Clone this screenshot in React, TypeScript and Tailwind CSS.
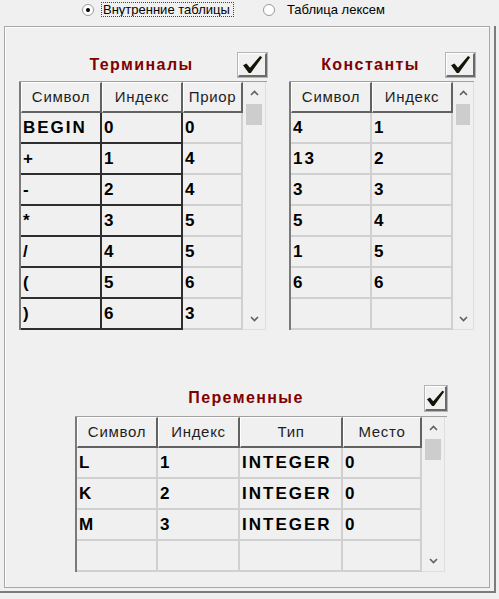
import React from "react";

type Col = { w: string; title: string; fixed?: boolean };

function Chevron({ up }: { up?: boolean }) {
  return (
    <svg width="9" height="6" viewBox="0 0 9 6">
      <path
        d={up ? "M1 5 L4.5 1.5 L8 5" : "M1 1 L4.5 4.5 L8 1"}
        fill="none"
        stroke="#606060"
        strokeWidth="1.6"
      />
    </svg>
  );
}

function CheckButton({ size }: { size: string }) {
  return (
    <div
      className={`${size} flex items-center justify-center bg-[#f0f0f0] border-t border-l border-t-white border-l-white border-r-2 border-b-2 border-r-[#6a6a6a] border-b-[#6a6a6a] shadow-[0_0_0_1px_#b4b4b4]`}
    >
      <svg width="21" height="19" viewBox="0 0 20 18">
        <polygon
          points="1,9.8 4.2,8 7.6,12 17.2,0.8 19.2,2 8.4,17 6.4,17"
          fill="#141408"
        />
      </svg>
    </div>
  );
}

function ScrollBar({ w }: { w: string }) {
  return (
    <div
      className={`${w} flex flex-col bg-[#f0f0f0] border-r border-b border-[#dedede]`}
    >
      <div className="h-[21px] flex items-center justify-center">
        <Chevron up />
      </div>
      <div className="mt-[1px] mx-[3px] h-[21px] bg-[#cdcdcd]" />
      <div className="flex-1" />
      <div className="h-[21px] flex items-center justify-center">
        <Chevron />
      </div>
    </div>
  );
}

function Grid({
  cols,
  rows,
  sb,
}: {
  cols: Col[];
  rows: string[][];
  sb: string;
}) {
  return (
    <div className="flex border-t border-t-[#a0a0a0]">
      <div className="flex flex-col border-l-2 border-l-[#7a7a7a]">
        <div className="flex">
          {cols.map((c, i) => (
            <div
              key={i}
              className={`${c.w} h-[31px] flex items-center justify-center overflow-hidden whitespace-nowrap text-[15px] tracking-[0.7px] text-[#1e1e1e] border-t border-l border-t-white border-l-white border-r-2 border-b-2 border-r-[#626262] border-b-[#626262]`}
            >
              {c.title}
            </div>
          ))}
        </div>
        {rows.map((r, ri) => (
          <div key={ri} className="flex">
            {cols.map((c, ci) => (
              <div
                key={ci}
                className={`${c.w} h-[31px] flex items-center pl-[2px] overflow-hidden whitespace-nowrap text-[17px] font-bold tracking-[2px] text-black border-r-2 border-b-2 ${
                  c.fixed ? "border-[#2e2e2e]" : "border-[#d0d0d0]"
                }`}
              >
                {r[ci]}
              </div>
            ))}
          </div>
        ))}
      </div>
      <ScrollBar w={sb} />
    </div>
  );
}

function Radio({ checked }: { checked?: boolean }) {
  return (
    <div className="w-[12px] h-[12px] rounded-full border border-[#9a9a9a] bg-white flex items-center justify-center">
      {checked && <div className="w-[4px] h-[4px] rounded-full bg-black" />}
    </div>
  );
}

function Title({ text, cls }: { text: string; cls: string }) {
  return (
    <div
      className={`${cls} text-center whitespace-nowrap text-[16px] font-bold tracking-[1.4px] text-[#800000]`}
    >
      {text}
    </div>
  );
}

export default function App() {
  const term: Col[] = [
    { w: "w-[81px]", title: "Символ", fixed: true },
    { w: "w-[81px]", title: "Индекс", fixed: true },
    { w: "w-[60px]", title: "Приор" },
  ];
  const termRows = [
    ["BEGIN", "0", "0"],
    ["+", "1", "4"],
    ["-", "2", "4"],
    ["*", "3", "5"],
    ["/", "4", "5"],
    ["(", "5", "6"],
    [")", "6", "3"],
  ];
  const cons: Col[] = [
    { w: "w-[81px]", title: "Символ" },
    { w: "w-[81px]", title: "Индекс" },
  ];
  const consRows = [
    ["4", "1"],
    ["13", "2"],
    ["3", "3"],
    ["5", "4"],
    ["1", "5"],
    ["6", "6"],
    ["", ""],
  ];
  const vars: Col[] = [
    { w: "w-[81px]", title: "Символ" },
    { w: "w-[82px]", title: "Индекс" },
    { w: "w-[103px]", title: "Тип" },
    { w: "w-[79px]", title: "Место" },
  ];
  const varRows = [
    ["L", "1", "INTEGER", "0"],
    ["K", "2", "INTEGER", "0"],
    ["M", "3", "INTEGER", "0"],
    ["", "", "", ""],
  ];

  return (
    <div className="w-[499px] h-[599px] bg-[#f0f0f0] overflow-hidden font-['Liberation_Sans',Arial,sans-serif] text-black">
      {/* radio row */}
      <div className="h-[19px] flex items-center pl-[82px] text-[13px]">
        <Radio checked />
        <div className="ml-[7px] w-[133px] h-[15px] border border-dotted border-[#444] overflow-hidden whitespace-nowrap pl-[1px] leading-[13px]">
          Внутренние таблицы
        </div>
        <div className="ml-[29px]">
          <Radio />
        </div>
        <div className="ml-[12px] whitespace-nowrap leading-[13px]">
          Таблица лексем
        </div>
      </div>

      {/* panel */}
      <div className="mt-[7px] w-[496px] h-[567px] border-r-2 border-b-2 border-[#7c7c7c]">
        <div className="ml-[4px] w-[486px] h-[562px] border border-[#a8a8a8] shadow-[inset_1px_1px_0_#ffffff]">
          <div className="pt-[26px] pl-[14px] flex gap-[22px]">
            {/* Terminals */}
            <div className="w-[248px] flex flex-col">
              <div className="h-[24px] flex items-center">
                <Title text="Терминалы" cls="ml-[61px] w-[123px]" />
                <div className="ml-auto">
                  <CheckButton size="w-[29px] h-[24px]" />
                </div>
              </div>
              <div className="mt-[4px]">
                <Grid cols={term} rows={termRows} sb="w-[23px]" />
              </div>
            </div>
            {/* Constants */}
            <div className="w-[185px] flex flex-col">
              <div className="h-[24px] flex items-center">
                <Title text="Константы" cls="ml-[20px] w-[123px]" />
                <div className="ml-auto mr-[-1px]">
                  <CheckButton size="w-[29px] h-[24px]" />
                </div>
              </div>
              <div className="mt-[4px]">
                <Grid cols={cons} rows={consRows} sb="w-[21px]" />
              </div>
            </div>
          </div>

          {/* Variables */}
          <div className="mt-[56px] ml-[70px] w-[372px] flex flex-col">
            <div className="h-[25px] flex items-end">
              <Title text="Переменные" cls="ml-[106px] w-[130px] mb-[1px]" />
              <div className="ml-auto">
                <CheckButton size="w-[22px] h-[25px]" />
              </div>
            </div>
            <div className="mt-[5px]">
              <Grid cols={vars} rows={varRows} sb="w-[23px]" />
            </div>
          </div>
        </div>
      </div>
    </div>
  );
}
